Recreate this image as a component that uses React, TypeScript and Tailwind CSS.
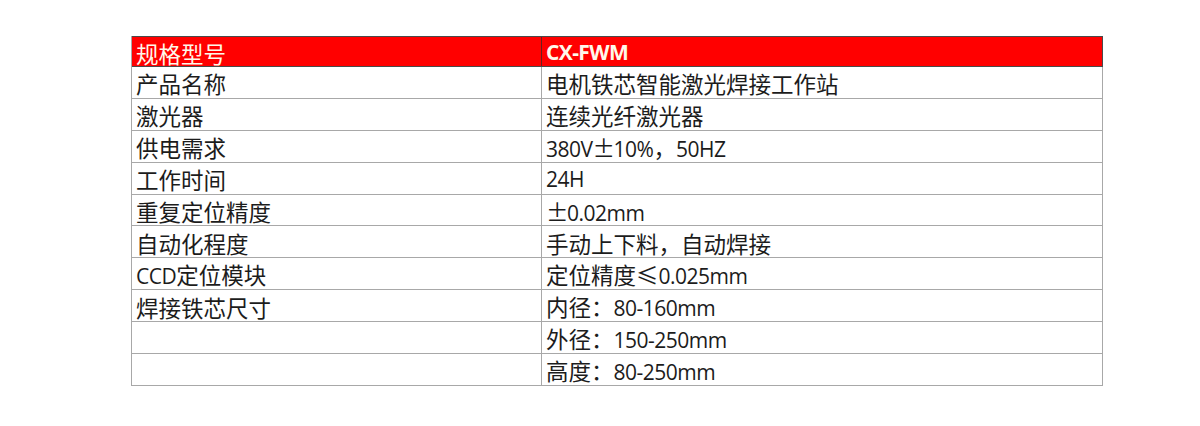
import React from "react";

const isWide = (c: string) => c.charCodeAt(0) > 0x2000;

function Txt({ s, bold = false }: { s: string; bold?: boolean }) {
  const runs: { wide: boolean; pm: boolean; t: string }[] = [];
  for (const ch of s) {
    if (ch === "±") {
      runs.push({ wide: true, pm: true, t: ch });
      continue;
    }
    const w = isWide(ch);
    const last = runs[runs.length - 1];
    if (last && !last.pm && last.wide === w) last.t += ch;
    else runs.push({ wide: w, pm: false, t: ch });
  }
  return (
    <span className="whitespace-pre">
      {runs.map((r, i) =>
        r.pm ? (
          <span
            key={i}
            className="inline-block w-[21px] text-center font-['Noto_Sans_CJK_SC',sans-serif] text-[22.5px]"
          >
            {r.t}
          </span>
        ) : r.wide ? (
          <span key={i} className="font-['Noto_Sans_CJK_SC',sans-serif] text-[22.5px]">
            {r.t}
          </span>
        ) : (
          <span
            key={i}
            className={
              bold
                ? "font-['Open_Sans',sans-serif] text-[21px] font-bold tracking-[-0.6px]"
                : "font-['Open_Sans',sans-serif] text-[21px] tracking-[-0.5px]"
            }
          >
            {r.t}
          </span>
        )
      )}
    </span>
  );
}

const rows: [string, string][] = [
  ["产品名称", "电机铁芯智能激光焊接工作站"],
  ["激光器", "连续光纤激光器"],
  ["供电需求", "380V±10%，50HZ"],
  ["工作时间", "24H"],
  ["重复定位精度", "±0.02mm"],
  ["自动化程度", "手动上下料，自动焊接"],
  ["CCD定位模块", "定位精度≤0.025mm"],
  ["焊接铁芯尺寸", "内径：80-160mm"],
  ["", "外径：150-250mm"],
  ["", "高度：80-250mm"],
];

export default function App() {
  return (
    <div className="w-[1200px] h-[426px] bg-white pt-[36px] pl-[131px]">
      <div className="w-[972px] border-l border-[#a8a8a8]">
        <div className="grid grid-cols-[410px_561px] h-[31px] bg-[#ff0000] border-t border-b border-[#4a4a4a] text-[#fff8ea]">
          <div className="flex items-center pl-[4px] pt-[3px] leading-none border-r border-[#6a2020]">
            <Txt s="规格型号" />
          </div>
          <div className="flex items-center pl-[4px] pt-[2px] leading-none border-r border-[#4a4a4a]">
            <Txt s="CX-FWM" bold />
          </div>
        </div>
        {rows.map(([a, b], i) => (
          <div
            key={i}
            className="grid grid-cols-[410px_561px] h-[31.9px] border-b border-[#a8a8a8] text-[#1c1c1c]"
          >
            <div className="flex items-center pl-[4px] pt-[3px] leading-none border-r border-[#a8a8a8]">
              <Txt s={a} />
            </div>
            <div className="flex items-center pl-[4px] pt-[3px] leading-none border-r border-[#a8a8a8]">
              <Txt s={b} />
            </div>
          </div>
        ))}
      </div>
    </div>
  );
}
